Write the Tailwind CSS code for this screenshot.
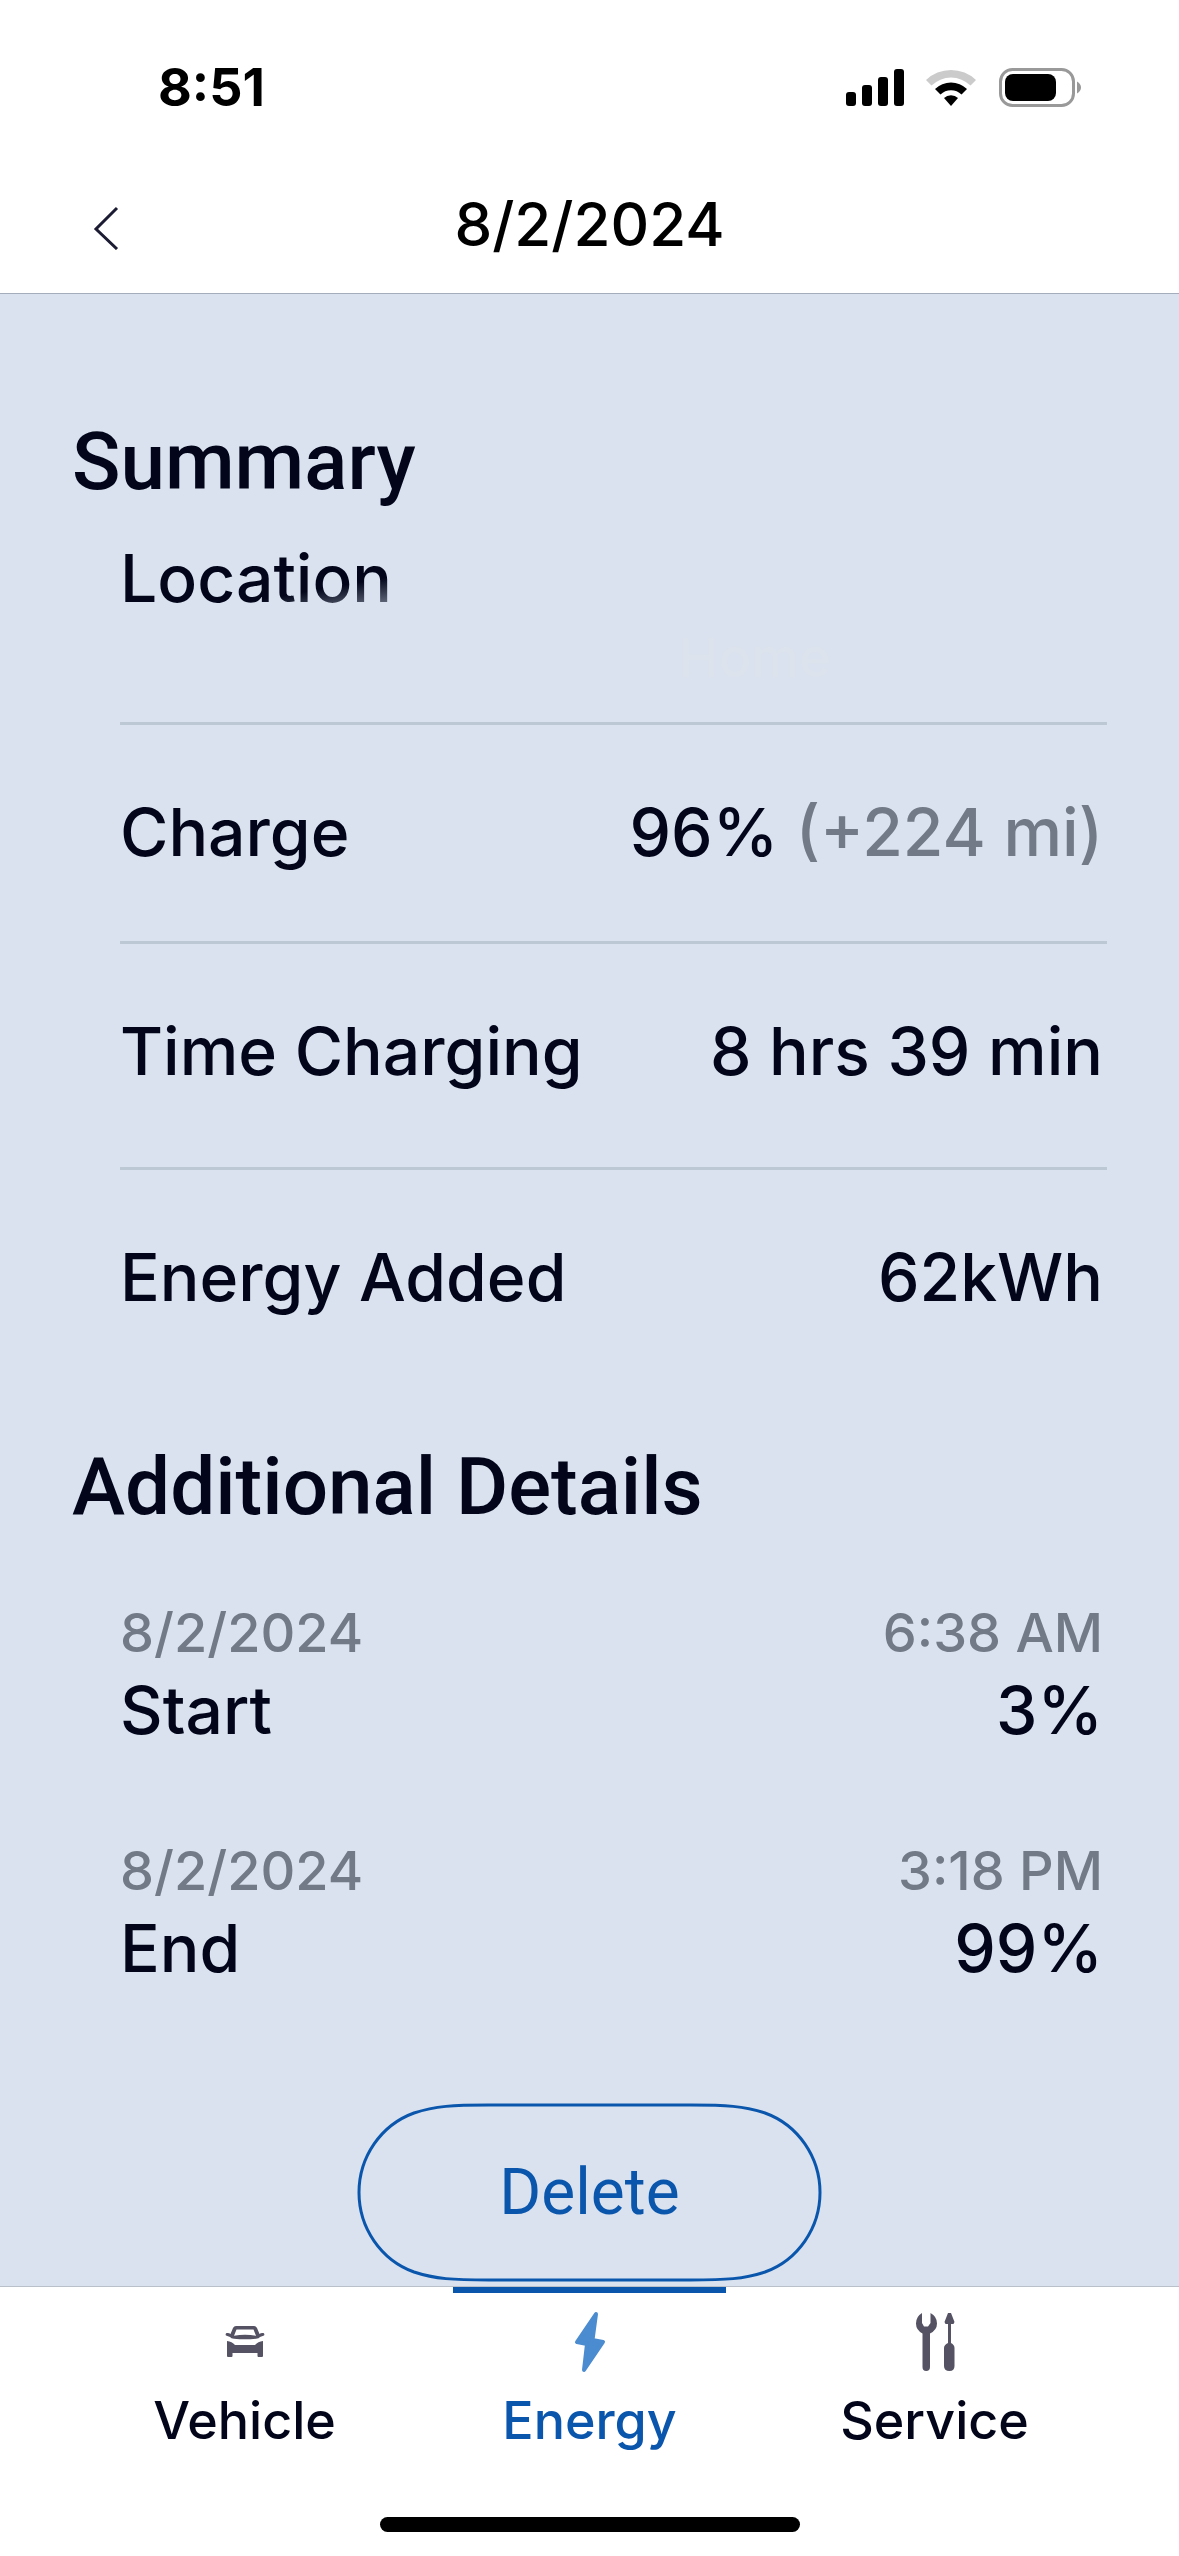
<!DOCTYPE html>
<html lang="en">
  <head>
    <meta charset="UTF-8" />
    <meta name="viewport" content="width=device-width, initial-scale=1.0" />
    <title>Charge Details</title>
    <script src="https://cdn.jsdelivr.net/npm/@tailwindcss/browser@4"></script>
  </head>

  <body class="flex flex-col min-h-screen bg-white text-[#03061a] font-['Inter',sans-serif]">

    <!-- Status bar -->
    <div class="flex h-[154px] items-start justify-between pt-[58px] pl-[158px] pr-[98px] text-black">
      <span class="text-[52px] leading-[60px] font-bold">8:51</span>
      <svg class="mt-[10px] h-[40px] w-[236px]" viewBox="0 0 236 40" aria-hidden="true">
        <!-- signal -->
        <rect x="1" y="24" width="10" height="14" rx="3" />
        <rect x="17" y="17" width="10" height="21" rx="3" />
        <rect x="33" y="9" width="10" height="29" rx="3" />
        <rect x="49" y="1" width="10" height="37" rx="3" />
        <!-- wifi -->
        <path d="M81 12 L86.500 17.500 A28 28 0 0 1 125.500 17.500 L131 12 A36 36 0 0 0 81 12Z" fill="#cbcbcb" />
        <path d="M90 21 L95.500 26.500 A15 15 0 0 1 116.500 26.500 L122 21 A23 23 0 0 0 90 21Z" />
        <path d="M99 30 L106 38 L113 30 A10 10 0 0 0 99 30Z" />
        <!-- battery -->
        <rect x="155.500" y="1.500" width="73" height="36" rx="12" fill="none" stroke="#999" stroke-width="3" />
        <rect x="160" y="6" width="51" height="27" rx="8" />
        <path d="M232 13.500 Q236 16 236 19.500 Q236 23 232 25.500Z" fill="#999" />
      </svg>
    </div>

    <!-- Header -->
    <header class="grid h-[140px] grid-cols-[1fr_auto_1fr] items-center border-b border-[#a3adbb] px-[92px]">
      <button type="button" aria-label="Back" class="w-7 pt-2">
        <svg class="h-[44px] w-[28px]" viewBox="0 0 28 44" fill="none" stroke="#1b1b33" stroke-width="3">
          <path d="M25 2 L4 23 L25 43" />
        </svg>
      </button>
      <h1 class="text-[60px] leading-[72px] font-medium text-black">8/2/2024</h1>
    </header>

    <main class="flex-1 bg-[#d9e2ee] px-[72px] pt-[120px] pb-1">
      <!-- Summary -->
      <h2 class="font-['Roboto',sans-serif] text-[80px] leading-[96px] font-medium">Summary</h2>
      <dl class="mt-[30px] pl-[48px] text-[66px] leading-[76px] font-medium">
        <div class="border-b-3 border-[#bdc8d5]">
          <dt class="w-fit bg-[linear-gradient(170deg,#03061a_68%,#5d6476_88%)] bg-clip-text text-transparent">Location</dt>
          <dd class="h-[106px] pr-[276px] text-right text-[54px] leading-[84px] text-[#dde3ec]">Home</dd>
        </div>
        <div class="flex items-baseline justify-between border-b-3 border-[#bdc8d5] pt-[69px] pr-1 pb-[71px]">
          <dt>Charge</dt>
          <dd>96% <span class="text-[#727987]">(+224 mi)</span></dd>
        </div>
        <div class="flex items-baseline justify-between border-b-3 border-[#bdc8d5] pt-[69px] pr-1 pb-[78px]">
          <dt>Time Charging</dt>
          <dd>8 hrs 39 min</dd>
        </div>
        <div class="flex items-baseline justify-between pt-[69px] pr-1">
          <dt>Energy Added</dt>
          <dd>62kWh</dd>
        </div>
      </dl>

      <!-- Additional details -->
      <h2 class="mt-[124px] font-['Roboto',sans-serif] text-[80px] leading-[96px] font-medium">Additional Details</h2>
      <div class="mt-[68px] flex flex-col gap-[93px] pr-1 pl-[48px] font-medium">
        <div>
          <p class="flex justify-between text-[54px] leading-[60px] text-[#727987]">
            <span>8/2/2024</span>
            <span>6:38 AM</span>
          </p>
          <p class="mt-[9px] flex justify-between text-[66px] leading-[76px]">
            <span>Start</span>
            <span>3%</span>
          </p>
        </div>
        <div>
          <p class="flex justify-between text-[54px] leading-[60px] text-[#727987]">
            <span>8/2/2024</span>
            <span>3:18 PM</span>
          </p>
          <p class="mt-[9px] flex justify-between text-[66px] leading-[76px]">
            <span>End</span>
            <span>99%</span>
          </p>
        </div>
      </div>

      <button type="button" class="relative mx-auto mt-[117px] flex h-[179px] w-[465px] items-center justify-center font-['Roboto',sans-serif] text-[64px] leading-[80px] text-[#0b56ad]">
        <svg class="absolute inset-0 h-full w-full" viewBox="0 0 465 179" fill="none" stroke="#0b56ad" stroke-width="3" aria-hidden="true">
          <path d="M132 2 H333 C369 2 387 3 408 10 C441 22 463 54 463 89.500 C463 125 441 157 408 169 C387 176 369 177 333 177 H132 C96 177 78 176 57 169 C24 157 2 125 2 89.500 C2 54 24 22 57 10 C78 3 96 2 132 2Z" />
        </svg>
        Delete
      </button>
    </main>

    <!-- Bottom navigation -->
    <nav class="border-t border-[#b9c0ca] bg-white px-[72px] pb-6">
      <div class="grid grid-cols-3 text-[52px] leading-[60px] font-medium">
        <a href="#" class="flex flex-col items-center gap-4 pt-[22px]">
          <span class="flex h-[66px] items-center">
            <svg class="h-[32px] w-[40px]" viewBox="0 0 40 32" fill="#545263" aria-hidden="true">
              <path fill-rule="evenodd" d="M11 0 H29 Q31 0 32 2 L34.500 8 Q36 6.500 38.500 7 Q40 8 39 9.500 L35 11 Q34 12.500 31 12.800 Q20 13.800 9 12.800 Q6 12.500 5 11 L1 9.500 Q0 8 1.500 7 Q4 6.500 5.500 8 L8 2 Q9 0 11 0Z M11.500 3.500 L9 9.800 Q20 7.800 31 9.800 L28.500 3.500Z" />
              <path d="M2 15 Q7 15.500 10 19 H30 Q33 15.500 38 15 V30 Q38 31 37 31 H33.500 Q32.500 31 32.500 30 V27 H7.500 V30 Q7.500 31 6.500 31 H3 Q2 31 2 30Z" />
            </svg>
          </span>
          Vehicle
        </a>
        <a href="#" class="relative flex flex-col items-center gap-4 pt-[22px] text-[#0b56ad]">
          <span class="absolute top-0 h-[6px] w-[273px] bg-[#0b56ad]"></span>
          <span class="flex h-[66px] items-center">
            <svg class="h-[62px] w-[32px]" viewBox="0 0 32 62" fill="#4b8bcf" stroke="#4b8bcf" stroke-width="4" stroke-linejoin="round" aria-hidden="true">
              <path d="M22 3 L3 31 L13 33 L10 59 L29 31 L18.500 29Z" />
            </svg>
          </span>
          Energy
        </a>
        <a href="#" class="flex flex-col items-center gap-4 pt-[22px]">
          <span class="flex h-[66px] items-center">
            <svg class="h-[60px] w-[40px]" viewBox="0 0 40 60" fill="#545263" aria-hidden="true">
              <!-- wrench -->
              <path d="M7 1 V11 L9 14.500 H13 L15.500 11 V1 Q22 4.500 22 11.500 Q22 18 15 21.500 V55 Q15 59 11.200 59 Q7.500 59 7.500 55 V21.500 Q1 18 1 11.500 Q1 4.500 7 1Z" />
              <!-- screwdriver -->
              <path d="M33 1 H36 L39.500 10 L38.500 12 H36 V31 Q39.500 33 39.500 36 V54 Q39.500 59 34.500 59 Q29 59 29 54 V36 Q29 33 33 31 V12 H30.500 L29.500 10Z" />
            </svg>
          </span>
          Service
        </a>
      </div>
      <div class="mx-auto mt-[66px] h-[15px] w-[420px] rounded-full bg-black"></div>
    </nav>
  </body>
</html>
